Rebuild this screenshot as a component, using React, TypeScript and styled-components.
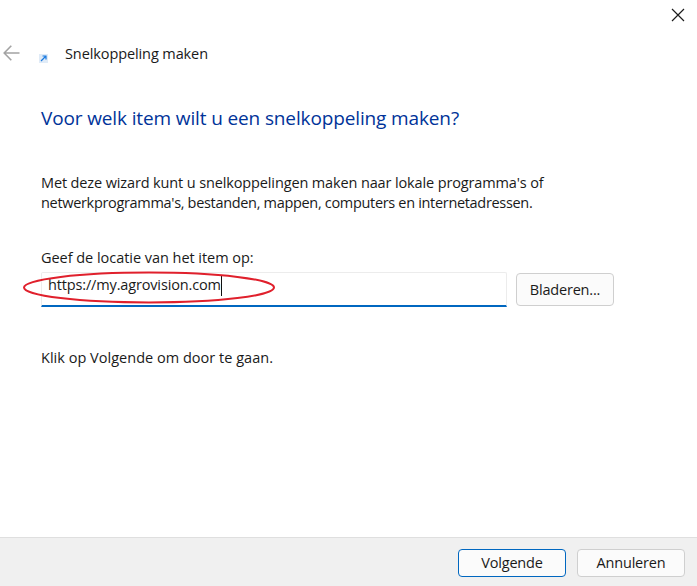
import { createGlobalStyle } from "styled-components";
import styled from "styled-components";

const GlobalStyle = createGlobalStyle`
  html, body {
    margin: 0;
    padding: 0;
    background: #ffffff;
  }
  body {
    font-family: "Open Sans", "Noto Sans", sans-serif;
    color: #1a1a1a;
  }
`;

const Dialog = styled.div`
  width: 697px;
  height: 586px;
  display: flex;
  flex-direction: column;
  background: #ffffff;
  overflow: hidden;
`;

const CloseRow = styled.div`
  height: 41px;
  display: flex;
  justify-content: flex-end;
  padding: 8px 12px 0 0;
  box-sizing: border-box;
`;

const IconButton = styled.div`
  width: 14px;
  height: 14px;
  display: flex;
`;

const Header = styled.div`
  height: 24px;
  display: flex;
  align-items: center;
  padding-left: 3px;
`;

const HeaderTitle = styled.span`
  font-size: 14.5px;
  margin-left: 17px;
  letter-spacing: -0.1px;
`;

const ShortcutIcon = styled.div`
  margin-left: 19px;
  margin-top: 10px;
  width: 9px;
  height: 9px;
  display: flex;
`;

const Body = styled.div`
  flex: 1;
  padding: 0 41px;
`;

const Heading = styled.h1`
  margin: 40px 0 0;
  font-size: 19px;
  font-weight: 400;
  line-height: 26px;
  color: #003399;
  letter-spacing: -0.13px;
`;

const Paragraph = styled.p<{ $top: number }>`
  margin: ${(p) => p.$top}px 0 0;
  font-size: 14.5px;
  line-height: 20px;
`;

const Line = styled.span<{ $tracking: number }>`
  display: block;
  letter-spacing: ${(p) => p.$tracking}px;
`;

const LocationRow = styled.div`
  display: flex;
  align-items: center;
  gap: 9px;
  margin-top: 4px;
  position: relative;
`;

const Input = styled.div`
  width: 466px;
  height: 35px;
  box-sizing: border-box;
  border: 1px solid #ececec;
  border-bottom: 2px solid #0067c0;
  border-radius: 2px 2px 0 0;
  padding-left: 6px;
  font-size: 14.5px;
  line-height: 24px;
  letter-spacing: -0.15px;
  display: flex;
  color: #1a1a1a;
`;

const Caret = styled.span`
  display: inline-block;
  width: 1px;
  height: 20px;
  margin-top: 3px;
  background: #111111;
`;

const Oval = styled.svg`
  position: absolute;
  left: -19px;
  top: -1px;
  width: 256px;
  height: 34px;
  pointer-events: none;
`;

const Button = styled.div<{ $primary?: boolean; $width: number; $height: number }>`
  width: ${(p) => p.$width}px;
  height: ${(p) => p.$height}px;
  border: 1px solid ${(p) => (p.$primary ? "#0067c0" : "#cfcfcf")};
  border-radius: 4px;
  background: #fbfbfb;
  font-size: 14.5px;
  letter-spacing: -0.2px;
  display: flex;
  align-items: center;
  justify-content: center;
  color: #1a1a1a;
`;

const Footer = styled.div`
  height: 49px;
  box-sizing: border-box;
  background: #f0f0f0;
  border-top: 1px solid #dfdfdf;
  display: flex;
  justify-content: flex-end;
  align-items: flex-start;
  gap: 11px;
  padding: 11px 12px 0 0;

  ${Button} {
    padding-bottom: 1px;
  }
`;

export default function App() {
  return (
    <Dialog>
      <GlobalStyle />
      <CloseRow>
        <IconButton>
          <svg width="14" height="14" viewBox="0 0 14 14">
            <path d="M1 1 L13 13 M13 1 L1 13" stroke="#1c1c1c" strokeWidth="1.2" fill="none" />
          </svg>
        </IconButton>
      </CloseRow>
      <Header>
        <svg width="17" height="16" viewBox="0 0 17 16">
          <path d="M1 8 H16.5 M8.3 0.8 L1.2 8 L8.3 15.2" stroke="#a3a3a3" strokeWidth="1.6" fill="none" />
        </svg>
        <ShortcutIcon>
          <svg width="9" height="9" viewBox="0 0 9 9">
            <rect x="0" y="0" width="9" height="9" fill="#e0ebf7" />
            <path d="M2 7 L6.5 2.5 M3.5 2 H7 V5.5" stroke="#1a7ae0" strokeWidth="1.2" fill="none" />
          </svg>
        </ShortcutIcon>
        <HeaderTitle>Snelkoppeling maken</HeaderTitle>
      </Header>
      <Body>
        <Heading>Voor welk item wilt u een snelkoppeling maken?</Heading>
        <Paragraph $top={42}>
          <Line $tracking={-0.13}>Met deze wizard kunt u snelkoppelingen maken naar lokale programma's of</Line>
          <Line $tracking={-0.32}>netwerkprogramma's, bestanden, mappen, computers en internetadressen.</Line>
        </Paragraph>
        <Paragraph $top={35}>
          <Line $tracking={-0.04}>Geef de locatie van het item op:</Line>
        </Paragraph>
        <LocationRow>
          <Input>
            https://my.agrovision.com
            <Caret />
          </Input>
          <Button $width={96} $height={31}>Bladeren...</Button>
          <Oval viewBox="0 0 256 34">
            <ellipse cx="127" cy="16.5" rx="125" ry="15" fill="none" stroke="#e0202c" strokeWidth="2" />
          </Oval>
        </LocationRow>
        <Paragraph $top={41}>
          <Line $tracking={0.02}>Klik op Volgende om door te gaan.</Line>
        </Paragraph>
      </Body>
      <Footer>
        <Button $primary $width={106} $height={25}>Volgende</Button>
        <Button $width={106} $height={25}>Annuleren</Button>
      </Footer>
    </Dialog>
  );
}
